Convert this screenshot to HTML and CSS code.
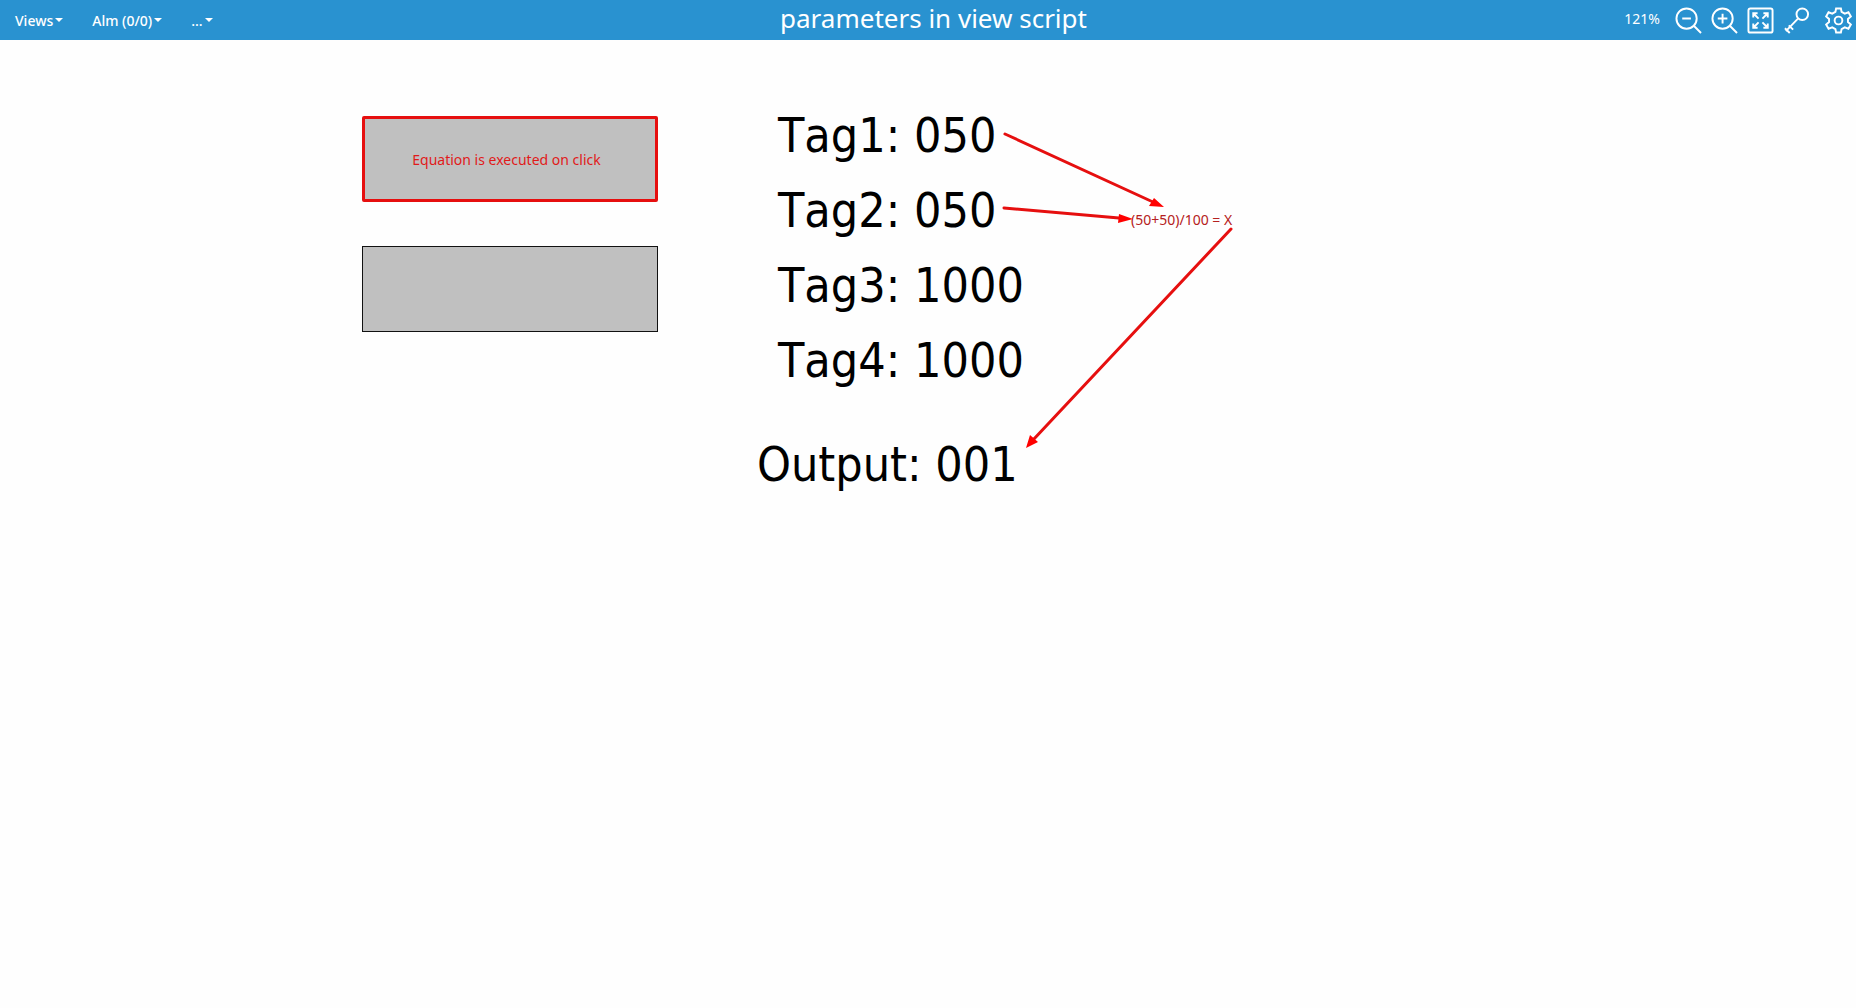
FILE: index.html
```html
<!DOCTYPE html>
<html lang="en">

<head>
    <meta charset="utf-8">
    <title>parameters in view script</title>
    <meta name="viewport" content="width=device-width, initial-scale=1">
    <link rel="stylesheet" href="styles.css">
</head>

<body>
    <header class="toolbar">
        <nav class="menu">
            <button type="button" class="menu-btn">Views<span class="caret"></span></button>
            <button type="button" class="menu-btn">Alm (0/0)<span class="caret"></span></button>
            <button type="button" class="menu-btn">...<span class="caret"></span></button>
        </nav>
        <h1 class="title">parameters in view script</h1>
        <div class="tools">
            <span class="zoom-level">121%</span>
            <button type="button" class="icon-btn" aria-label="Zoom out">
                <svg viewBox="0 0 28 28"><circle cx="12" cy="12" r="10.5" /><path d="M7.5 12h9M19.5 19.5L27 27" /></svg>
            </button>
            <button type="button" class="icon-btn" aria-label="Zoom in">
                <svg viewBox="0 0 28 28"><circle cx="12" cy="12" r="10.5" /><path d="M7 12h10M12 7v10M19.5 19.5L27 27" /></svg>
            </button>
            <button type="button" class="icon-btn" aria-label="Fit to screen">
                <svg viewBox="0 0 28 28"><rect x="1.5" y="1.5" width="25" height="25" rx="2" /><path d="M6.5 11V6.5H11M6.5 6.5l5.5 5.5M17 6.5h4.5V11M21.5 6.5L16 12M6.5 17v4.5H11M6.5 21.5L12 16M21.5 17v4.5H17M21.5 21.5L16 16" /></svg>
            </button>
            <button type="button" class="icon-btn icon-key" aria-label="Log in">
                <svg viewBox="0 0 28 28"><circle cx="20" cy="7.5" r="6" /><path d="M15.5 12L3 25M2 22l5 5M6 19l4.5 4.5" /></svg>
            </button>
            <button type="button" class="icon-btn" aria-label="Settings">
                <svg viewBox="0 0 28 28"><circle cx="14" cy="14" r="4" /><path d="M11.5 1.5h5l.7 3.5 3.3 1.9 3.8-1.4 2.5 4.3-3 2.6v3.2l3 2.6-2.5 4.3-3.8-1.4-3.3 1.9-.7 3.5h-5l-.7-3.5-3.3-1.9-3.8 1.4-2.5-4.3 3-2.6v-3.2l-3-2.6 2.5-4.3 3.8 1.4 3.3-1.9z" /></svg>
            </button>
        </div>
    </header>

    <main class="view">
        <div class="buttons">
            <button type="button" class="panel panel-marked">Equation is executed on click</button>
            <button type="button" class="panel" aria-label="Run script"></button>
        </div>

        <div class="readings">
            <p class="tag">Tag1: 050</p>
            <p class="tag">Tag2: 050</p>
            <p class="tag">Tag3: 1000</p>
            <p class="tag">Tag4: 1000</p>
            <p class="output">Output: 001</p>

            <!-- arrows from the tags through the formula to the output -->
            <svg class="arrows" viewBox="0 0 500 400" aria-hidden="true">
                <path class="line" d="M248 34L396 102M247 108L362 118M474 129L276 340" />
                <path class="head" d="M407 107l-10-9-5 8zM376 119l-14-5-1 9zM269 348l4-13 8 7z" />
            </svg>
            <span class="formula">(50+50)/100 = X</span>
        </div>
    </main>
</body>

</html>
```
FILE: styles.css
```css
* {
    box-sizing: border-box;
    margin: 0;
    padding: 0;
}

body {
    font-family: "Noto Sans", sans-serif;
    background: #fefefe;
    min-height: 100vh;
}

button {
    font: inherit;
    color: inherit;
    border: none;
    background: none;
    cursor: pointer;
}

.toolbar {
    display: grid;
    grid-template-columns: 1fr auto 1fr;
    align-items: center;
    height: 40px;
    padding: 0 4px 0 15px;
    background: #2992d0;
    color: #fff;
}

.menu {
    display: flex;
    gap: 29px;
    font-size: 14px;
    font-weight: 500;
}

.menu-btn {
    display: flex;
    align-items: center;
    gap: 2px;
}

.caret {
    border: 4px solid transparent;
    border-top-color: #fff;
    border-bottom: none;
}

.title {
    font-size: 26px;
    line-height: 36px;
    font-weight: 400;
    padding-bottom: 4px;
}

.tools {
    display: flex;
    justify-content: flex-end;
    align-items: center;
    gap: 9px;
}

.zoom-level {
    font-size: 14px;
    margin-right: 6px;
    padding-bottom: 4px;
}

.icon-btn {
    width: 27px;
    height: 27px;
}

.icon-btn svg {
    display: block;
    width: 27px;
    height: 27px;
    fill: none;
    stroke: #fff;
    stroke-width: 2;
}

.icon-key {
    width: 33px;
}

.view {
    display: flex;
    gap: 99px;
    padding: 58px 0 0 362px;
}

.buttons {
    display: flex;
    flex-direction: column;
    gap: 44px;
    padding-top: 18px;
}

.panel {
    width: 296px;
    height: 86px;
    background: #c0c0c0;
    border: 1px solid #111;
    font-size: 14px;
}

.panel-marked {
    padding-right: 7px;
    border: 3px solid #e60f0f;
    border-radius: 2px;
    color: #e01a1a;
}

.readings {
    position: relative;
    font-family: "DejaVu Sans Condensed", "DejaVu Sans", sans-serif;
    font-size: 48px;
    font-kerning: none;
    line-height: 75px;
}

.tag {
    padding-left: 21px;
}

.output {
    margin-top: 29px;
}

.arrows {
    position: absolute;
    top: 2px;
    left: 0;
    width: 500px;
    height: 400px;
}

.line {
    fill: none;
    stroke: #e60f0f;
    stroke-width: 3;
    stroke-linecap: round;
}

.head {
    fill: #f00;
}

.formula {
    position: absolute;
    top: 112px;
    left: 374px;
    font-family: "Noto Sans", sans-serif;
    font-size: 14px;
    line-height: 20px;
    color: #b52020;
    white-space: nowrap;
}
```
